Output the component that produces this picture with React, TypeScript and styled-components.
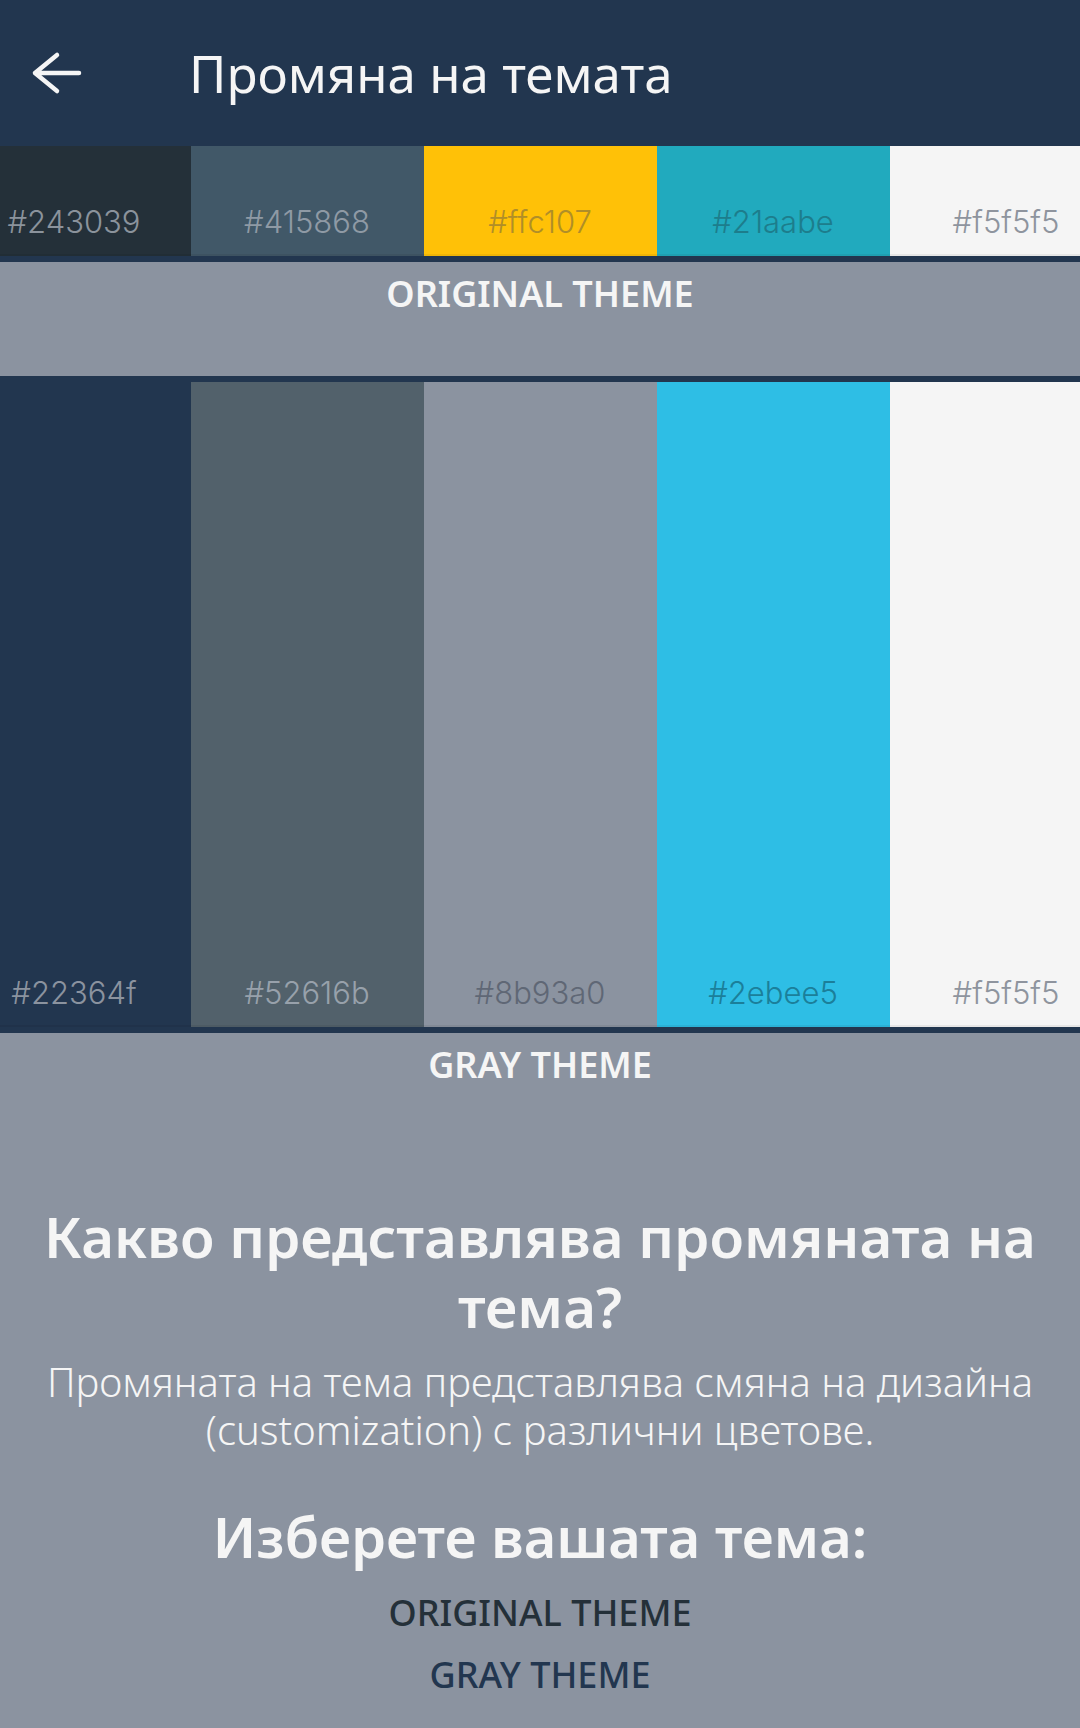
import styled, { createGlobalStyle } from "styled-components";

const GlobalStyle = createGlobalStyle`
  html, body {
    margin: 0;
    padding: 0;
    background: #8b93a0;
  }
  * {
    box-sizing: border-box;
  }
`;

type Swatch = { color: string; ink: string };

const originalTheme: Swatch[] = [
  { color: "#243039", ink: "#8b939c" },
  { color: "#415868", ink: "#8f9aa5" },
  { color: "#ffc107", ink: "#b08e28" },
  { color: "#21aabe", ink: "#1d7d8c" },
  { color: "#f5f5f5", ink: "#8e949e" },
];

const grayTheme: Swatch[] = [
  { color: "#22364f", ink: "#8b939f" },
  { color: "#52616b", ink: "#98a1ab" },
  { color: "#8b93a0", ink: "#5f6775" },
  { color: "#2ebee5", ink: "#1b7f9a" },
  { color: "#f5f5f5", ink: "#8e949e" },
];

const BackArrow = () => (
  <svg width="52" height="44" viewBox="0 0 52 44" fill="none">
    <path
      d="M4 22 H48 M26 4 L4 22 L26 40"
      stroke="#f5f5f5"
      strokeWidth="4.5"
      strokeLinecap="round"
      strokeLinejoin="round"
    />
  </svg>
);

const App = () => {
  return (
    <Page>
      <GlobalStyle />
      <Header>
        <BackButton>
          <BackArrow />
        </BackButton>
        <Title>Промяна на темата</Title>
      </Header>

      <ThemeList>
        <SwatchRow $height={110}>
          {originalTheme.map((s) => (
            <SwatchCell key={s.color} $color={s.color} $ink={s.ink}>
              {s.color}
            </SwatchCell>
          ))}
        </SwatchRow>
        <ThemeLabel $height={114}>ORIGINAL THEME</ThemeLabel>

        <SwatchRow $height={645}>
          {grayTheme.map((s) => (
            <SwatchCell key={s.color + s.ink} $color={s.color} $ink={s.ink}>
              {s.color}
            </SwatchCell>
          ))}
        </SwatchRow>
        <ThemeLabel>GRAY THEME</ThemeLabel>
      </ThemeList>

      <Info>
        <InfoTitle>Какво представлява промяната на тема?</InfoTitle>
        <InfoText>
          Промяната на тема представлява смяна на дизайна (customization) с
          различни цветове.
        </InfoText>
        <ChooseTitle>Изберете вашата тема:</ChooseTitle>
        <ThemeLink $color="#243039">ORIGINAL THEME</ThemeLink>
        <ThemeLink $color="#22364f">GRAY THEME</ThemeLink>
      </Info>
    </Page>
  );
};

export default App;

const Page = styled.div`
  width: 1080px;
  min-height: 1728px;
  background: #8b93a0;
  font-family: "Noto Sans", "Open Sans", sans-serif;
  color: #f5f5f5;
  overflow: hidden;
`;

const Header = styled.header`
  height: 146px;
  background: #22364f;
  display: flex;
  align-items: center;
  padding-left: 31px;
`;

const BackButton = styled.div`
  display: flex;
  width: 52px;
  height: 44px;
  margin-right: 106px;
  cursor: pointer;
`;

const Title = styled.h1`
  margin: 0;
  font-size: 51px;
  line-height: 60px;
  font-weight: 400;
  color: #f5f5f5;
`;

const ThemeList = styled.div`
  background: #22364f;
  display: flex;
  flex-direction: column;
  gap: 6px;
`;

const SwatchRow = styled.div<{ $height: number }>`
  display: flex;
  justify-content: center;
  height: ${(p) => p.$height}px;
  overflow: hidden;
`;

const SwatchCell = styled.div<{ $color: string; $ink: string }>`
  flex: 0 0 233px;
  display: flex;
  align-items: flex-end;
  justify-content: center;
  padding-bottom: 19px;
  background: ${(p) => p.$color};
  color: ${(p) => p.$ink};
  box-shadow: inset 0 -2px 0 rgba(0, 0, 0, 0.06);
  font-family: "Inter", "Lato", sans-serif;
  font-weight: 300;
  font-size: 31px;
  line-height: 31px;
  cursor: pointer;
`;

const ThemeLabel = styled.div<{ $height?: number }>`
  background: #8b93a0;
  height: ${(p) => (p.$height ? `${p.$height}px` : "auto")};
  padding-top: 10px;
  text-align: center;
  font-size: 36px;
  line-height: 44px;
  font-weight: 600;
  color: #f5f5f5;
  cursor: pointer;
`;

const Info = styled.section`
  display: flex;
  flex-direction: column;
  align-items: center;
  text-align: center;
  padding: 0 36px 40px;
`;

const InfoTitle = styled.h2`
  margin: 115px 0 0;
  font-size: 56.5px;
  line-height: 70px;
  font-weight: 600;
  color: #f5f5f5;
`;

const InfoText = styled.p`
  margin: 16px 0 0;
  font-size: 40px;
  line-height: 48px;
  font-weight: 300;
  color: #f5f5f5;
`;

const ChooseTitle = styled.h3`
  margin: 47px 0 0;
  font-size: 56px;
  line-height: 70px;
  font-weight: 600;
  color: #f5f5f5;
`;

const ThemeLink = styled.div<{ $color: string }>`
  margin-top: 20px;
  font-size: 36px;
  line-height: 44px;
  font-weight: 500;
  color: ${(p) => p.$color};
  cursor: pointer;

  & + & {
    margin-top: 18px;
  }
`;
